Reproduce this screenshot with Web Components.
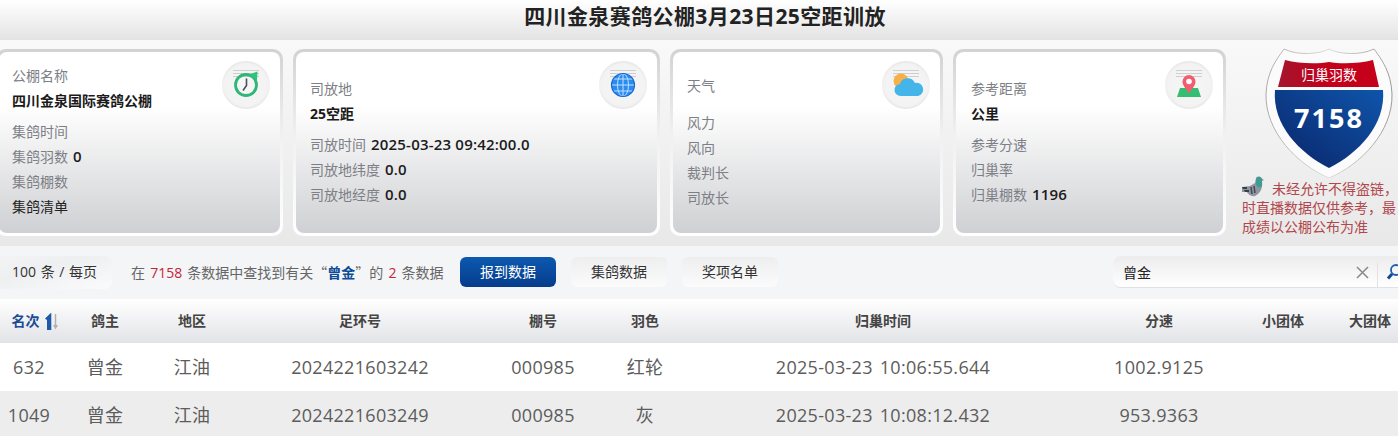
<!DOCTYPE html>
<html lang="zh"><head><meta charset="utf-8"><title>赛鸽</title>
<style>
html,body{margin:0;padding:0;height:436px;overflow:hidden;background:#fff}
body{font-family:"Open Sans","Noto Sans CJK SC",sans-serif;font-size:14px;color:#444}
.hl{color:#c5243c}.kw{color:#0d4a96;font-weight:700;font-family:"Noto Sans CJK SC",sans-serif}
.q{font-family:"Noto Sans CJK SC",sans-serif;display:inline-block;width:14px}
.q.l{text-align:right}
</style></head><body>
<race-page>
  <page-title>四川金泉赛鸽公棚3月23日25空距训放</page-title>
  <stats-band>
    <stat-card style="width:287px" pad="13" pb="4">
      <svg slot="icon" viewBox="0 0 48 48" width="48" height="48"><circle cx="24" cy="24" r="10.500" fill="none" stroke="#2fb777" stroke-width="2.800"/><path d="M24.500 17.500v7l-3.500 5" fill="none" stroke="#4a4f5a" stroke-width="1.600"/><path d="M27 13.500l8.500-3-.5 9z" fill="#33c27e"/></svg>
      <stat-line>公棚名称</stat-line><stat-name>四川金泉国际赛鸽公棚</stat-name>
      <stat-line>集鸽时间</stat-line><stat-line>集鸽羽数<b slot="v">0</b></stat-line><stat-line>集鸽棚数</stat-line><stat-line dark>集鸽清单</stat-line>
    </stat-card>
    <stat-card style="width:367px" pad="14" pb="2">
      <svg slot="icon" viewBox="0 0 48 48" width="48" height="48"><circle cx="24" cy="24" r="11.500" fill="#2b8cf0"/><g fill="none" stroke="#bfe0ff" stroke-width="1"><ellipse cx="24" cy="24" rx="5.500" ry="11.500"/><path d="M24 12.500v23M12.500 24h23M14 18h20M14 30h20"/></g><circle cx="24" cy="24" r="11.500" fill="none" stroke="#1668d0" stroke-width="1.200"/></svg>
      <stat-line>司放地</stat-line><stat-name>25空距</stat-name>
      <stat-line>司放时间<b slot="v">2025-03-23 09:42:00.0</b></stat-line><stat-line>司放地纬度<b slot="v">0.0</b></stat-line><stat-line>司放地经度<b slot="v">0.0</b></stat-line>
    </stat-card>
    <stat-card style="width:273px" pad="14" pb="2">
      <svg slot="icon" viewBox="0 0 48 48" width="48" height="48"><circle cx="19" cy="20" r="7.500" fill="#f5b04a"/><path d="M19 35a6 6 0 0 1-1-12 8 8 0 0 1 15-1 6.500 6.500 0 0 1 3 13z" fill="#43b5e8"/></svg>
      <stat-line>天气</stat-line><stat-name></stat-name>
      <stat-line>风力</stat-line><stat-line>风向</stat-line><stat-line>裁判长</stat-line><stat-line>司放长</stat-line>
    </stat-card>
    <stat-card style="width:273px" pad="15" pb="2">
      <svg slot="icon" viewBox="0 0 48 48" width="48" height="48"><path d="M15 27h18l3 9H12z" fill="#35bd72"/><path d="M24 32c-3.500-5-6.500-7.500-6.500-11.500a6.500 6.500 0 0 1 13 0C30.500 24.500 27.500 27 24 32z" fill="#f25d70"/><circle cx="24" cy="20.500" r="2.800" fill="#fff"/></svg>
      <stat-line>参考距离</stat-line><stat-name>公里</stat-name>
      <stat-line>参考分速</stat-line><stat-line>归巢率</stat-line><stat-line>归巢棚数<b slot="v">1196</b></stat-line>
    </stat-card>
    <count-shield count="7158"></count-shield>
  </stats-band>
  <tool-bar>
    <page-size>100 条 / 每页</page-size>
    <result-note>在 <span class="hl">7158</span> 条数据中查找到有关<span class="q l">“</span><span class="kw">曾金</span><span class="q">”</span>的 <span class="hl">2</span> 条数据</result-note>
    <tab-btn active>报到数据</tab-btn><tab-btn>集鸽数据</tab-btn><tab-btn>奖项名单</tab-btn>
    <search-box>曾金</search-box>
  </tool-bar>
  <race-row head>
    <span style="color:#1c4c94;padding-left:12px">名次<svg viewBox="0 0 15 17" width="15" height="17" style="vertical-align:-4px;margin-left:4px"><path d="M6.800 0L1 5.500 2.800 7 3 6.500V17H7.300V0z" fill="#1f5aa8"/><path d="M11.500 1v13" stroke="#b0b0b0" stroke-width="1.500"/><path d="M9 12l2.500 4.500 2.500-4.500z" fill="#b0b0b0"/></svg></span>
    <span>鸽主</span><span>地区</span><span>足环号</span><span>棚号</span><span>羽色</span><span>归巢时间</span><span>分速</span><span>小团体</span><span>大团体</span>
  </race-row>
  <race-row>
    <span>632</span><span>曾金</span><span>江油</span><span>2024221603242</span><span>000985</span><span>红轮</span><span>2025-03-23 10:06:55.644</span><span>1002.9125</span><span></span><span></span>
  </race-row>
  <race-row alt>
    <span>1049</span><span>曾金</span><span>江油</span><span>2024221603249</span><span>000985</span><span>灰</span><span>2025-03-23 10:08:12.432</span><span>953.9363</span><span></span><span></span>
  </race-row>
</race-page>
<script>
function def(name,css,html,init){
  customElements.define(name,class extends HTMLElement{
    constructor(){super();const r=this.attachShadow({mode:'open'});r.innerHTML='<style>'+css+'</style>'+html;}
    connectedCallback(){if(init)init(this,this.shadowRoot);}
  });
}
def('race-page',':host{display:block;width:1428px;margin-left:-9px}','<slot></slot>');
def('page-title',':host{display:block;height:40px;line-height:32px;text-align:center;font-size:21px;letter-spacing:.4px;font-weight:700;color:#222;background:linear-gradient(#fff,#e3e3e3)}','<slot></slot>');
def('stats-band',':host{display:flex;gap:10px;height:206px;box-sizing:border-box;padding:9px 0 0 5px;background:linear-gradient(#f9f9f9,#e8e8e8);align-items:flex-start}','<slot></slot>');
def('stat-card',`:host{display:block;box-sizing:border-box;height:187px;flex:none;border-radius:10px;padding:3px;background:linear-gradient(#d2d2d2,#f0f0f0 45%,#fff);position:relative}
.in{box-sizing:border-box;height:181px;border-radius:8px;background:linear-gradient(#fff,#fff 30%,#cfd0d3);display:flex;flex-direction:column;justify-content:center}
.ic{position:absolute;top:12px;right:13px;width:48px;height:48px;border-radius:50%;background:radial-gradient(circle,#f6f6f6 0,#f3f3f3 62%,rgba(240,240,240,0) 88%),linear-gradient(#c9c9c9,#ececec 50%,#c9c9c9);overflow:hidden}
.ic::before{content:"";position:absolute;left:11px;right:11px;top:9px;height:7px;background:repeating-linear-gradient(#cfcfcf 0 1px,transparent 1px 3px)}
::slotted(svg){position:absolute;left:0;top:0}`,
'<div class="in"><slot></slot></div><div class="ic"><slot name="icon"></slot></div>',
(el,r)=>{const s=r.querySelector('.in').style;s.paddingLeft=el.getAttribute('pad')+'px';s.paddingBottom=el.getAttribute('pb')+'px';});
def('stat-line',`:host{display:block;height:25px;line-height:25px;font-size:14px;color:#7d7f86;white-space:nowrap}
:host([dark]){color:#222}
::slotted(b){color:#1b1b1b;font-weight:600;font-size:15px;letter-spacing:.2px;margin-left:5px}`,'<slot></slot><slot name="v"></slot>');
def('stat-name',`:host{display:block;height:25px;line-height:25px;margin-bottom:6px;font-weight:700;font-size:14px;color:#1a1a1a;white-space:nowrap}
:host(:empty){height:6px}`,'<slot></slot>');
def('count-shield',`:host{display:block;width:156px;margin-left:6px;flex:none;font-size:14px;color:#b0474c;line-height:19px}
.sh{position:relative;width:130px;height:130px;margin-left:22px;margin-top:-1px}
svg.s{display:block}
.t{position:absolute;left:0;right:0;text-align:center;color:#fff}
.a{top:17px;line-height:20px;font-size:14px}
.b{top:50px;line-height:40px;font-size:27px;font-weight:700;letter-spacing:2px}
.w{white-space:nowrap;margin-top:-2px}
.w svg{vertical-align:-3px;margin-right:6px}`,
`<div class="sh"><svg class="s" viewBox="0 0 130 130" width="130" height="130">
<defs><linearGradient id="bl" x1="1" y1="0" x2="0" y2="1"><stop offset="0" stop-color="#0f55ab"/><stop offset="1" stop-color="#0a2468"/></linearGradient>
<linearGradient id="rd" x1="0" x2="1"><stop offset="0" stop-color="#a4152e"/><stop offset=".5" stop-color="#c4001a"/><stop offset="1" stop-color="#c4001a"/></linearGradient>
<linearGradient id="ed" x1="0" x2="1"><stop offset="0" stop-color="#aaa"/><stop offset=".5" stop-color="#ddd"/><stop offset="1" stop-color="#999"/></linearGradient></defs>
<path d="M65 1C56 6 34 8 20 1 12 12 3 24 2 46 1 84 34 117 65 130 96 117 129 84 128 46 127 24 118 12 110 1 96 8 74 6 65 1z" fill="#fbfbfc" stroke="url(#ed)" stroke-width="1"/>
<path d="M21 12C35 16 55 16 65 14 75 16 95 16 109 12L115 39H14z" fill="url(#rd)"/>
<path d="M11 42H119C122 76 95 105 65 120 35 105 8 76 11 42z" fill="url(#bl)"/></svg>
<div class="t a">归巢羽数</div><div class="t b"></div></div>
<div class="w"><svg viewBox="0 0 24 21" width="24" height="21"><path d="M0 11l8-1 5-3 1-5c1-2 4-2 5 0l3 2-2 1c1 6-1 12-7 15-4 1-7-2-8-4H0z" fill="#8d95a0"/><path d="M14 3c2-3 5-3 6 0v7c-2 2-4 2-6-1z" fill="#3f9c92"/><path d="M0 11h5v2H1zM2 14h5v2H3z" fill="#3a3f48"/><path d="M9 11l1 7M12 10l1 7" stroke="#444b55" stroke-width="1.500"/></svg>未经允许不得盗链，<br>时直播数据仅供参考，最<br>成绩以公棚公布为准</div>`,
(el,r)=>{r.querySelector('.b').textContent=el.getAttribute('count');});
def('tool-bar',':host{display:flex;align-items:center;height:53px;background:#f4f5f7;position:relative}','<slot></slot>');
def('page-size',':host{display:block;box-sizing:border-box;width:121px;height:33px;margin:-1px 19px 0 0;padding-left:21px;line-height:32px;border-radius:0 8px 8px 0;background:linear-gradient(165deg,#f4f4f4,#eeeff1 40%,#fbfbfc);color:#333;font-size:14px;word-spacing:1px;white-space:nowrap}','<slot></slot>');
def('result-note',':host{display:block;width:314px;margin-right:15px;font-size:14px;color:#666;word-spacing:1.500px;white-space:nowrap;margin-top:-1px}','<slot></slot>');
def('tab-btn',`:host{display:block;width:96px;height:30px;line-height:29px;text-align:center;margin:-1px 15px 0 0;border-radius:6px;font-size:14px;color:#333;background:linear-gradient(#eeeeef,#fbfbfc)}
:host([active]){color:#fff;background:linear-gradient(#0c59b0,#063c8b)}`,'<slot></slot>');
def('search-box',`:host{display:flex;align-items:center;position:absolute;left:1122px;top:10px;width:320px;height:32px;box-sizing:border-box;padding-left:10px;border-radius:8px;background:linear-gradient(#ececed,#fff);border-bottom:1px solid #dfe3e8;font-size:14px;color:#222}
svg{position:absolute;left:240px;top:5px}
.sep{position:absolute;left:264px;top:7px;width:1px;height:24px;background:#e2e2e2}`,
'<slot></slot><svg width="52" height="24" viewBox="0 0 52 24"><path d="M3 5l11 11M14 5L3 16" stroke="#8c8c8c" stroke-width="1.600" transform="translate(1 1)"/><circle cx="43" cy="9" r="5" fill="none" stroke="#1b5fae" stroke-width="1.800"/><path d="M39 13l-4 4.500" stroke="#0d4a96" stroke-width="3"/></svg><div class="sep"></div>');
def('race-row',`:host{display:grid;grid-template-columns:76px 76px 98px 238px 128px 76px 400px 152px 96px 78px;align-items:center;justify-items:center;height:48px;background:#fff;font-size:18px;font-weight:400;color:#5c5c5c;letter-spacing:.3px;word-spacing:2px;line-height:1;white-space:nowrap}
:host([alt]){background:#ededed}
:host([head]){height:44px;background:linear-gradient(#fff,#e2e3e7);font-size:14px;font-weight:700;color:#444;letter-spacing:0;word-spacing:0}`,'<slot></slot>');
</script>
</body></html>
